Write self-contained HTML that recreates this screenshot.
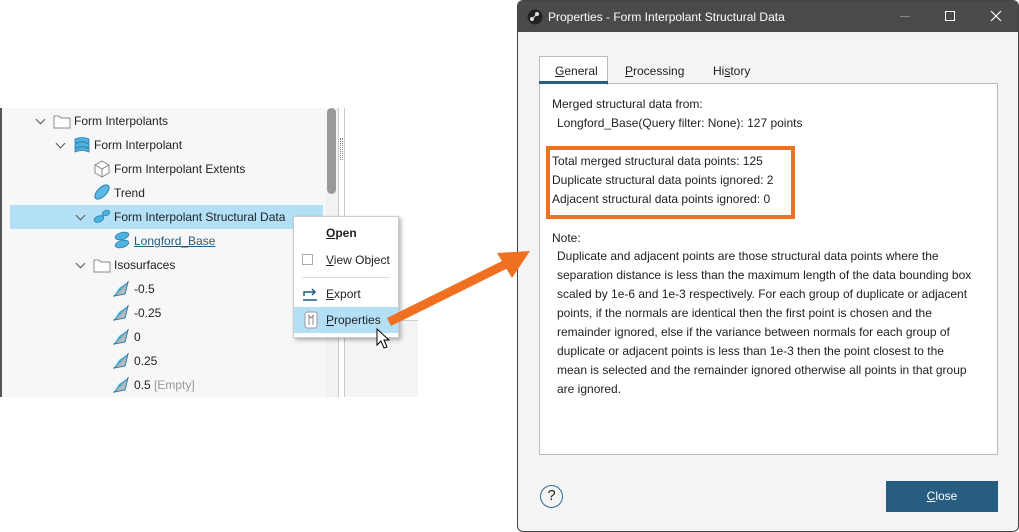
<!DOCTYPE html>
<html><head><meta charset="utf-8"><style>
*{margin:0;padding:0;box-sizing:border-box}
body{width:1019px;height:532px;background:#fff;position:relative;overflow:hidden;font-family:"Liberation Sans",sans-serif;font-size:12px;color:#222}
.abs{position:absolute}
.row{position:absolute;height:24px;line-height:24px;white-space:nowrap;font-size:12px}
.chev{position:absolute;width:7px;height:7px;border-right:1.3px solid #555;border-bottom:1.3px solid #555;transform:rotate(45deg)}
.t{position:absolute;white-space:nowrap}
u{text-decoration:underline}
</style></head><body>
<div class="abs" style="left:0;top:108px;width:326px;height:289px;background:#f7f7f7;border-left:2px solid #555"></div>
<div class="abs" style="left:10px;top:205px;width:313px;height:24px;background:#b3e0f7"></div>
<div class="abs" style="left:326px;top:108px;width:12px;height:289px;background:#f2f2f2"></div>
<div class="abs" style="left:327px;top:108px;width:9px;height:86px;background:#999;border-radius:5px"></div>
<div class="abs" style="left:338px;top:108px;width:1px;height:289px;background:#c8c8c8"></div>
<div class="abs" style="left:344px;top:108px;width:1px;height:289px;background:#c8c8c8"></div>
<div class="abs" style="left:340px;top:138px;width:3px;height:22px;border-left:1px dotted #888;border-right:1px dotted #888"></div>
<div class="abs" style="left:345px;top:108px;width:73px;height:289px;background:#fff"></div>
<div class="abs" style="left:345px;top:320px;width:73px;height:77px;background:#f4f4f4;border-top:1px solid #ccc"></div>

<div class="chev" style="left:37px;top:116px"></div>
<svg class="abs" style="left:53px;top:113px" width="18" height="16"><path d="M1 3h5l2 2h9v10H1z" fill="#fff" stroke="#888"/></svg>
<div class="row" style="left:74px;top:109px">Form Interpolants</div>

<div class="chev" style="left:57px;top:140px"></div>
<svg class="abs" style="left:73px;top:136px" width="18" height="18"><path d="M2 3q7-3 14 0v4q-7-3-14 0z M2 8q7-3 14 0v4q-7-3-14 0z M2 13q7-3 14 0v3q-7-3-14 0z" fill="#4fb3e0" stroke="#2a7fb0" stroke-width=".8"/></svg>
<div class="row" style="left:94px;top:133px">Form Interpolant</div>

<svg class="abs" style="left:93px;top:160px" width="18" height="18"><path d="M9 1l7 4v8l-7 4-7-4V5z M2 5l7 4 7-4 M9 9v8" fill="#fff" stroke="#888"/></svg>
<div class="row" style="left:114px;top:157px">Form Interpolant Extents</div>

<svg class="abs" style="left:93px;top:183px" width="18" height="18"><ellipse cx="9" cy="9" rx="9" ry="4.5" transform="rotate(-45 9 9)" fill="#5bb8e6" stroke="#2a7fb0"/></svg>
<div class="row" style="left:114px;top:181px">Trend</div>

<div class="chev" style="left:77px;top:212px"></div>
<svg class="abs" style="left:93px;top:208px" width="18" height="16"><ellipse cx="6" cy="11" rx="5" ry="3" transform="rotate(-20 6 11)" fill="#4fb3e0" stroke="#2a7fb0" stroke-width=".8"/><ellipse cx="13" cy="5" rx="4" ry="2.5" transform="rotate(-20 13 5)" fill="#4fb3e0" stroke="#2a7fb0" stroke-width=".8"/></svg>
<div class="row" style="left:114px;top:205px">Form Interpolant Structural Data</div>

<svg class="abs" style="left:113px;top:231px" width="18" height="18"><ellipse cx="9" cy="5" rx="7" ry="3.5" transform="rotate(-15 9 5)" fill="#4fb3e0" stroke="#2a7fb0" stroke-width=".8"/><ellipse cx="9" cy="13" rx="7" ry="3.5" transform="rotate(-15 9 13)" fill="#4fb3e0" stroke="#2a7fb0" stroke-width=".8"/></svg>
<div class="row" style="left:134px;top:229px;color:#1f5d85"><u>Longford_Base</u></div>

<div class="chev" style="left:77px;top:260px"></div>
<svg class="abs" style="left:93px;top:257px" width="18" height="16"><path d="M1 3h5l2 2h9v10H1z" fill="#fff" stroke="#888"/></svg>
<div class="row" style="left:114px;top:253px">Isosurfaces</div>

<svg class="abs" style="left:113px;top:280px" width="17" height="17"><path d="M1 16L15 2 12 14z" fill="#bbb" stroke="#2a7fb0"/><path d="M1 16L15 2 6 8z" fill="#4fb3e0"/></svg>
<div class="row" style="left:134px;top:277px">-0.5</div>
<svg class="abs" style="left:113px;top:304px" width="17" height="17"><path d="M1 16L15 2 12 14z" fill="#bbb" stroke="#2a7fb0"/><path d="M1 16L15 2 6 8z" fill="#4fb3e0"/></svg>
<div class="row" style="left:134px;top:301px">-0.25</div>
<svg class="abs" style="left:113px;top:328px" width="17" height="17"><path d="M1 16L15 2 12 14z" fill="#bbb" stroke="#2a7fb0"/><path d="M1 16L15 2 6 8z" fill="#4fb3e0"/></svg>
<div class="row" style="left:134px;top:325px">0</div>
<svg class="abs" style="left:113px;top:352px" width="17" height="17"><path d="M1 16L15 2 12 14z" fill="#bbb" stroke="#2a7fb0"/><path d="M1 16L15 2 6 8z" fill="#4fb3e0"/></svg>
<div class="row" style="left:134px;top:349px">0.25</div>
<svg class="abs" style="left:113px;top:376px" width="17" height="17"><path d="M1 16L15 2 12 14z" fill="#bbb" stroke="#2a7fb0"/><path d="M1 16L15 2 6 8z" fill="#4fb3e0"/></svg>
<div class="row" style="left:134px;top:373px">0.5 <span style="color:#999">[Empty]</span></div>

<div class="abs" style="left:293px;top:216px;width:106px;height:122px;background:#fff;border:1px solid #ccc;box-shadow:2px 2px 4px rgba(0,0,0,.3)"></div>
<div class="t" style="left:326px;top:226px;font-weight:bold"><u>O</u>pen</div>
<div class="abs" style="left:302px;top:254px;width:11px;height:11px;border:1px solid #aaa"></div>
<div class="t" style="left:326px;top:253px"><u>V</u>iew Object</div>
<div class="abs" style="left:302px;top:277px;width:88px;height:1px;background:#ddd"></div>
<svg class="abs" style="left:302px;top:286px" width="16" height="16"><path d="M1 14h14 M2 10V6h11 M10 3l3 3-3 3" fill="none" stroke="#1f5d85" stroke-width="1.5"/></svg>
<div class="t" style="left:326px;top:287px"><u>E</u>xport</div>
<div class="abs" style="left:294px;top:307px;width:104px;height:26px;background:#b3e0f7"></div>
<svg class="abs" style="left:304px;top:311px" width="14" height="18"><rect x="1" y="1" width="12" height="16" rx="2" fill="#fff" stroke="#999"/><path d="M5 4v10 M9 4v10 M4 4l3 3 3-3" fill="none" stroke="#888"/></svg>
<div class="t" style="left:326px;top:313px"><u>P</u>roperties</div>
<svg class="abs" style="left:376px;top:328px" width="14" height="22"><path d="M1 1v16l4-4 3 7 3-1-3-7h5z" fill="#fff" stroke="#000"/></svg>

<div class="abs" style="left:517px;top:0;width:502px;height:532px;background:#f4f4f4;border:1px solid #444;border-radius:6px;overflow:hidden">
 <div class="abs" style="left:0;top:0;width:502px;height:31px;background:#4a4a48"></div>
 <svg class="abs" style="left:9px;top:8px" width="16" height="16"><circle cx="8" cy="8" r="7.5" fill="#222"/><circle cx="5" cy="10" r="2" fill="#ddd"/><circle cx="10" cy="5" r="2" fill="#ddd"/><path d="M5 10l5-5" stroke="#ddd"/></svg>
 <div class="t" style="left:30px;top:9px;color:#fff;font-size:12px">Properties - Form Interpolant Structural Data</div>
 <div class="abs" style="left:382px;top:15px;width:10px;height:1px;background:#888"></div>
 <div class="abs" style="left:427px;top:10px;width:10px;height:10px;border:1.2px solid #fff"></div>
 <svg class="abs" style="left:472px;top:9px" width="12" height="12"><path d="M1 1l10 10M11 1L1 11" stroke="#fff" stroke-width="1.2"/></svg>
 <div class="abs" style="left:21px;top:82px;width:459px;height:372px;background:#fff;border:1px solid #bbb"></div>
 <div class="abs" style="left:21px;top:55px;width:69px;height:29px;background:#fff;border:1px solid #bbb;border-bottom:none"></div>
 <div class="abs" style="left:21px;top:80px;width:69px;height:3px;background:#265d80"></div>
 <div class="t" style="left:37px;top:63px"><u>G</u>eneral</div>
 <div class="t" style="left:107px;top:63px"><u>P</u>rocessing</div>
 <div class="t" style="left:195px;top:63px">Hi<u>s</u>tory</div>
 <div class="t" style="left:34px;top:96px">Merged structural data from:</div>
 <div class="t" style="left:39px;top:115px">Longford_Base(Query filter: None): 127 points</div>
 <div class="abs" style="left:28px;top:145px;width:249px;height:73px;border:4px solid #f07022"></div>
 <div class="t" style="left:34px;top:153px">Total merged structural data points: 125</div>
 <div class="t" style="left:34px;top:172px">Duplicate structural data points ignored: 2</div>
 <div class="t" style="left:34px;top:191px">Adjacent structural data points ignored: 0</div>
 <div class="t" style="left:34px;top:230px">Note:</div>
 <div class="abs" style="left:39px;top:246px;width:430px;line-height:19px;white-space:nowrap">Duplicate and adjacent points are those structural data points where the<br>separation distance is less than the maximum length of the data bounding box<br>scaled by 1e-6 and 1e-3 respectively. For each group of duplicate or adjacent<br>points, if the normals are identical then the first point is chosen and the<br>remainder ignored, else if the variance between normals for each group of<br>duplicate or adjacent points is less than 1e-3 then the point closest to the<br>mean is selected and the remainder ignored otherwise all points in that group<br>are ignored.</div>
 <div class="abs" style="left:22px;top:484px;width:23px;height:23px;border:1.5px solid #2f6b93;border-radius:50%;text-align:center;line-height:20px;font-size:15px;color:#222">?</div>
 <div class="abs" style="left:368px;top:480px;width:112px;height:31px;background:#265d80;color:#fff;text-align:center;line-height:31px"><u>C</u>lose</div>
</div>

<svg class="abs" style="left:0;top:0" width="1019" height="532"><path d="M389 322L508 263" stroke="#f07022" stroke-width="9"/><path d="M530 251L497 253 512 278z" fill="#f07022"/></svg>
</body></html>
